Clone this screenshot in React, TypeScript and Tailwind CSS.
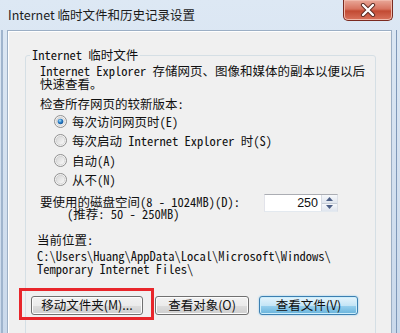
import React from "react";

function Radio({ checked }: { checked?: boolean }) {
  return (
    <svg width="13" height="13" viewBox="0 0 13 13" className="shrink-0">
      <defs>
        <linearGradient id="rg" x1="0" y1="0" x2="1" y2="1">
          <stop offset="0" stopColor="#d4d4d4" />
          <stop offset="1" stopColor="#fbfbfb" />
        </linearGradient>
        <radialGradient id="dot" cx="0.4" cy="0.35" r="0.7">
          <stop offset="0" stopColor="#aee4fb" />
          <stop offset="0.5" stopColor="#2b7fc8" />
          <stop offset="1" stopColor="#16508f" />
        </radialGradient>
      </defs>
      <circle cx="6.5" cy="6.5" r="6" fill="#f4f4f4" stroke="#8f8f8f" strokeWidth="1" />
      <circle cx="6.5" cy="6.5" r="4.3" fill="url(#rg)" stroke="#c6c6c6" strokeWidth="0.6" />
      {checked && <circle cx="6.5" cy="6.5" r="2.8" fill="url(#dot)" />}
    </svg>
  );
}

export default function App() {
  const body =
    "font-['Noto_Sans_Mono_CJK_SC','Noto_Sans_CJK_SC',monospace] text-[12.5px] text-[#111]";
  const sans = "font-['Noto_Sans_CJK_SC','Liberation_Sans',sans-serif]";
  const btn =
    "h-[19px] rounded-[3px] border border-[#707070] bg-[linear-gradient(#f2f2f2_0%,#ebebeb_50%,#dddddd_50%,#cfcfcf_100%)] flex items-center justify-center text-[12.5px] leading-none text-[#111] shadow-[inset_0_0_0_1px_#fcfcfc]";
  return (
    <div className="w-[400px] h-[333px] overflow-hidden flex flex-col bg-[linear-gradient(#dde8f4,#cad9eb)]">
      {/* title bar */}
      <div className="h-[30px] flex items-start justify-between shrink-0">
        <div className={`${sans} pl-[8px] pt-[7px] text-[12.5px] leading-[16px] text-[#1b1b1b]`}>
          Internet 临时文件和历史记录设置
        </div>
        <div className="mr-[7px] w-[50px] h-[21px] rounded-b-[5px] border border-t-0 border-[#7a2a20] bg-[linear-gradient(#e9a899_0%,#d7735f_45%,#c24a33_55%,#d8725c_100%)] flex items-center justify-center shadow-[inset_0_0_0_1px_#f0b8aa]">
          <svg width="16" height="14" viewBox="0 0 16 14">
            <path d="M3 2 L13 12 M13 2 L3 12" stroke="#5a2a22" strokeWidth="4.2" strokeLinecap="round" />
            <path d="M3 2 L13 12 M13 2 L3 12" stroke="#ffffff" strokeWidth="2.4" strokeLinecap="round" />
          </svg>
        </div>
      </div>
      {/* body */}
      <div className="flex-1 flex">
        <div className="w-[7px] flex shrink-0">
          <div className="ml-[1px] w-[2px] bg-[#9fb4cd]" />
        </div>
        <div className="flex-1 border border-[#9cafc5] bg-[#f0f0f0] shadow-[inset_1px_1px_0_#ffffff]">
          <fieldset className="mt-[17px] ml-[17px] mr-[15px] border border-[#d5dfe5] rounded-[3px] pb-[40px]">
            <legend className={`${body} ml-[4px] px-[2px] leading-[14px]`}>Internet 临时文件</legend>
            <div className={`${body} pl-[5px] pt-[1.5px]`}>
              <p className="pl-[9px] leading-[13px] whitespace-nowrap">
                Internet Explorer 存储网页、图像和媒体的副本以便以后
                <br />
                快速查看。
              </p>
              <p className="pl-[9px] mt-[7px] leading-[13px]">检查所存网页的较新版本:</p>
              <div className="mt-[2px] pl-[23px]">
                {[
                  ["每次访问网页时(E)", true],
                  ["每次启动 Internet Explorer 时(S)", false],
                  ["自动(A)", false],
                  ["从不(N)", false],
                ].map(([t, c]) => (
                  <div key={t as string} className="h-[19.5px] flex items-center gap-[5px] whitespace-nowrap">
                    <Radio checked={c as boolean} />
                    <span className="leading-[13px]">{t as string}</span>
                  </div>
                ))}
              </div>
              <div className="mt-[4.5px] flex items-start">
                <div className="w-[233px] pl-[9px] pt-[2px] leading-[12px] whitespace-nowrap">
                  <div>要使用的磁盘空间(8 - 1024MB)(D):</div>
                  <div className="pl-[27px]">(推荐: 50 - 250MB)</div>
                </div>
                <div className="w-[74px] h-[18px] flex border border-[#abadb3] border-b-[#e3e9ef] border-l-[#e2e3ea] border-r-[#dbdfe6] bg-white">
                  <div className="flex-1 pr-[3px] text-right font-['Liberation_Sans',sans-serif] text-[12.5px] leading-[16px] text-[#111]">
                    250
                  </div>
                  <div className="w-[16px] flex flex-col border-l border-[#d6dbe3]">
                    <div className="flex-1 flex items-center justify-center bg-[linear-gradient(#f6f8fb,#dfe5ee)] border-b border-[#c5ccd6]">
                      <svg width="7" height="4" viewBox="0 0 7 4">
                        <path d="M0 4 L3.5 0 L7 4 Z" fill="#4c5f86" />
                      </svg>
                    </div>
                    <div className="flex-1 flex items-center justify-center bg-[linear-gradient(#f6f8fb,#dfe5ee)]">
                      <svg width="7" height="4" viewBox="0 0 7 4">
                        <path d="M0 0 L3.5 4 L7 0 Z" fill="#4c5f86" />
                      </svg>
                    </div>
                  </div>
                </div>
              </div>
              <p className="pl-[6px] mt-[12.5px] leading-[13px]">当前位置:</p>
              <p className="pl-[6px] mt-[3px] leading-[13px] whitespace-nowrap">
                C:\Users\Huang\AppData\Local\Microsoft\Windows\
                <br />
                Temporary Internet Files\
              </p>
              <div className={`${sans} mt-[21.5px] flex items-start`}>
                <div className="relative">
                  <div className={`${btn} w-[112px]`}>移动文件夹(M)...</div>
                  <div className="absolute -left-[12px] -top-[8px] -right-[11px] -bottom-[5px] border-[3px] border-[#e8262b]" />
                </div>
                <div className={`${btn} w-[94px] ml-[12px]`}>查看对象(O)</div>
                <div className="ml-[10px] w-[99px] h-[19px] rounded-[3px] border border-[#3c7fb1] bg-[linear-gradient(#e5f4fc_0%,#c4e5f6_50%,#98d1ef_50%,#68b3db_100%)] shadow-[inset_0_0_0_1px_#cdeefb,0_0_2px_#7fc6ee] flex items-center justify-center text-[12.5px] leading-none text-[#111]">
                  查看文件(V)
                </div>
              </div>
            </div>
          </fieldset>
        </div>
        <div className="w-[8px] flex shrink-0">
          <div className="ml-[4px] w-[1px] bg-[#7f98b8]" />
        </div>
      </div>
    </div>
  );
}
